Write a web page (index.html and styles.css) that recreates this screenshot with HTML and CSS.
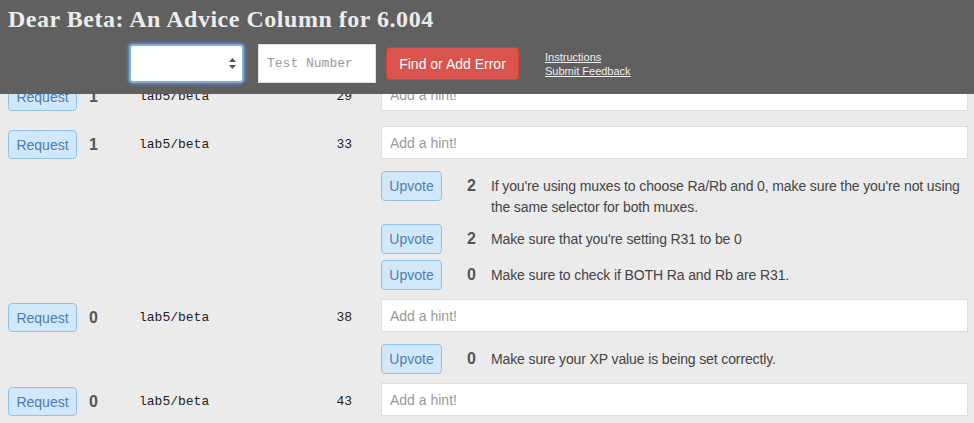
FILE: index.html
```html
<!DOCTYPE html>
<html>
<head>
<meta charset="utf-8">
<title>Dear Beta</title>
<link rel="stylesheet" href="styles.css">
</head>
<body>
<header class="topbar">
  <h1 class="title">Dear Beta: An Advice Column for 6.004</h1>
  <div class="controls">
    <div class="select">
      <svg class="arrows" width="7" height="11" viewBox="0 0 7 11"><path d="M3.5 0 L7 4 H0 Z M3.5 11 L7 7 H0 Z" fill="#555"/></svg>
    </div>
    <input class="testnum" type="text" placeholder="Test Number">
    <button class="find">Find or Add Error</button>
    <div class="links">
      <a href="#">Instructions</a>
      <a href="#">Submit Feedback</a>
    </div>
  </div>
</header>

<main class="list">
  <div class="err">
    <div class="meta">
      <button class="btn req">Request</button>
      <span class="count">1</span>
      <span class="name">lab5/beta</span>
      <span class="num">29</span>
    </div>
    <div class="hintcol">
      <input class="hintin" type="text" placeholder="Add a hint!">
      <div class="hints"></div>
    </div>
  </div>

  <div class="err">
    <div class="meta">
      <button class="btn req">Request</button>
      <span class="count">1</span>
      <span class="name">lab5/beta</span>
      <span class="num">33</span>
    </div>
    <div class="hintcol">
      <input class="hintin" type="text" placeholder="Add a hint!">
      <div class="hints">
        <div class="hint">
          <button class="btn up">Upvote</button>
          <span class="hcount">2</span>
          <span class="htext">If you're using muxes to choose Ra/Rb and 0, make sure the you're not using the same selector for both muxes.</span>
        </div>
        <div class="hint">
          <button class="btn up">Upvote</button>
          <span class="hcount">2</span>
          <span class="htext">Make sure that you're setting R31 to be 0</span>
        </div>
        <div class="hint">
          <button class="btn up">Upvote</button>
          <span class="hcount">0</span>
          <span class="htext">Make sure to check if BOTH Ra and Rb are R31.</span>
        </div>
      </div>
    </div>
  </div>

  <div class="err">
    <div class="meta">
      <button class="btn req">Request</button>
      <span class="count">0</span>
      <span class="name">lab5/beta</span>
      <span class="num">38</span>
    </div>
    <div class="hintcol">
      <input class="hintin" type="text" placeholder="Add a hint!">
      <div class="hints">
        <div class="hint">
          <button class="btn up">Upvote</button>
          <span class="hcount">0</span>
          <span class="htext">Make sure your XP value is being set correctly.</span>
        </div>
      </div>
    </div>
  </div>

  <div class="err">
    <div class="meta">
      <button class="btn req">Request</button>
      <span class="count">0</span>
      <span class="name">lab5/beta</span>
      <span class="num">43</span>
    </div>
    <div class="hintcol">
      <input class="hintin" type="text" placeholder="Add a hint!">
      <div class="hints"></div>
    </div>
  </div>
</main>
</body>
</html>
```

FILE: styles.css
```css
* { box-sizing: border-box; }

html, body {
  margin: 0;
  padding: 0;
  background: #ebebeb;
  font-family: "Liberation Sans", Arial, sans-serif;
  color: #444;
}

.topbar {
  position: fixed;
  top: 0;
  left: 0;
  right: 0;
  height: 94px;
  background: #606060;
  padding: 4px 8px 0 8px;
  z-index: 10;
}

.title {
  margin: 0;
  font-family: "Liberation Serif", "Times New Roman", serif;
  font-weight: bold;
  font-size: 24px;
  line-height: 30px;
  color: #ececec;
  letter-spacing: 0.52px;
}

.controls {
  display: flex;
  align-items: center;
  height: 39px;
  margin-top: 10px;
  padding-left: 121px;
}

.select {
  width: 115px;
  height: 39px;
  background: #fff;
  border: 2px solid #7eaee0;
  border-radius: 4px;
  box-shadow: 0 0 3px 1px rgba(102, 160, 225, 0.8);
  display: flex;
  align-items: center;
  justify-content: flex-end;
  padding-right: 6px;
}

.testnum {
  width: 118px;
  height: 39px;
  margin-left: 14px;
  border: 1px solid #ddd;
  background: #fff;
  padding: 0 0 0 8px;
  font-family: "Liberation Mono", "Courier New", monospace;
  font-size: 13px;
  outline: none;
}
.testnum::placeholder { color: #9a9a9a; }

.find {
  width: 133px;
  height: 33px;
  margin-left: 10px;
  background: #d9534f;
  border: 1px solid #d43f3a;
  border-radius: 4px;
  color: #fff;
  font-family: "Liberation Sans", Arial, sans-serif;
  font-size: 14px;
  padding: 0;
}

.links {
  display: flex;
  flex-direction: column;
  margin-left: 26px;
  font-size: 11px;
  line-height: 14px;
}
.links a { color: #eeeeee; text-decoration: underline; }

.list {
  padding: 78px 6px 0 8px;
}

.err {
  display: flex;
  align-items: flex-start;
  margin-bottom: 3px;
}

.meta {
  display: flex;
  align-items: center;
  padding-top: 4px;
  width: 373px;
  flex: none;
}

.btn {
  background: #d1e7fa;
  border: 1px solid #90c2e8;
  border-radius: 4px;
  color: #4d7db0;
  font-family: "Liberation Sans", Arial, sans-serif;
  font-size: 14px;
  padding: 0;
}

.req { width: 69px; height: 29px; }

.count {
  width: 50px;
  margin-left: 12px;
  font-weight: bold;
  font-size: 16px;
  color: #555;
}

.name {
  width: 160px;
  font-family: "Liberation Mono", "Courier New", monospace;
  font-size: 13px;
  color: #222;
}

.num {
  width: 53px;
  text-align: right;
  font-family: "Liberation Mono", "Courier New", monospace;
  font-size: 13px;
  color: #222;
}

.hintcol {
  flex: 1;
  display: flex;
  flex-direction: column;
}

.hintin {
  width: 100%;
  height: 33px;
  border: 1px solid #ddd;
  background: #fff;
  padding: 0 0 0 8px;
  font-family: "Liberation Sans", Arial, sans-serif;
  font-size: 14px;
  outline: none;
}
.hintin::placeholder { color: #999; }

.hints { padding-top: 12px; }

.hint {
  display: flex;
  align-items: flex-start;
  margin-bottom: 6px;
}

.up { width: 61px; height: 30px; flex: none; }

.hcount {
  width: 24px;
  margin-left: 25px;
  flex: none;
  font-weight: bold;
  font-size: 16px;
  line-height: 30px;
  color: #555;
}

.htext {
  padding-top: 5px;
  font-size: 14px;
  line-height: 21px;
  letter-spacing: -0.12px;
  color: #444;
}
```
